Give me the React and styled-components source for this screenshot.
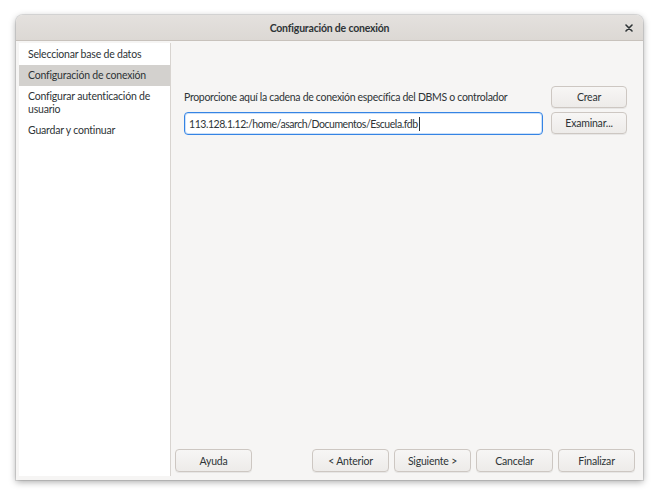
import styled, { createGlobalStyle } from 'styled-components';

const GlobalStyle = createGlobalStyle`
  html, body {
    margin: 0;
    padding: 0;
    background: #ffffff;
  }
  body {
    font-family: Lato, "Noto Sans", sans-serif;
    font-size: 10.5px;
    letter-spacing: -0.2px;
    color: #2e3436;
  }
`;

const Page = styled.div`
  padding: 15px 18px 20px 16px;
`;

const Window = styled.div`
  width: 627px;
  height: 465px;
  display: flex;
  flex-direction: column;
  background: #f6f5f4;
  border-radius: 7px 7px 0 0;
  box-shadow: 0 2px 7px rgba(0,0,0,0.35), 0 0 0 1px rgba(0,0,0,0.1);
  overflow: hidden;
`;

const TitleBar = styled.div`
  height: 25px;
  flex: none;
  display: flex;
  align-items: center;
  justify-content: center;
  position: relative;
  background: linear-gradient(#e4e1de, #dcd8d4);
  border-bottom: 1px solid #c8c2bc;
  font-weight: bold;
  color: #2e3436;
`;

const CloseButton = styled.button`
  position: absolute;
  right: 6px;
  top: 5px;
  width: 16px;
  height: 16px;
  padding: 0;
  border: none;
  background: transparent;
  display: flex;
  align-items: center;
  justify-content: center;
`;

const Body = styled.div`
  flex: 1;
  display: flex;
  padding: 2px 4px 4px 3px;
  min-height: 0;
`;

const Sidebar = styled.ul`
  width: 151px;
  flex: none;
  margin: 0;
  padding: 1px 0 0;
  list-style: none;
  background: #ffffff;
  border-right: 1px solid #d8d4d0;
`;

const SideItem = styled.li`
  padding: 4px 9px;
  line-height: 13px;
  background: ${p => (p.$active ? '#d3d1ce' : 'transparent')};
`;

const Content = styled.div`
  flex: 1;
  display: flex;
  flex-direction: column;
`;

const Form = styled.div`
  display: grid;
  grid-template-columns: 1fr 76px;
  grid-template-rows: 22px 23px;
  column-gap: 8px;
  row-gap: 4px;
  padding: 43px 12px 0 13px;
`;

const Label = styled.div`
  align-self: center;
  white-space: nowrap;
  letter-spacing: -0.3px;
`;

const Entry = styled.div`
  display: flex;
  align-items: center;
  height: 23px;
  box-sizing: border-box;
  padding: 0 4px;
  background: #ffffff;
  border: 1px solid #3584e4;
  border-radius: 4px;
  box-shadow: inset 0 0 0 1px rgba(53,132,228,0.25);
  white-space: nowrap;
  letter-spacing: -0.45px;
`;

const Caret = styled.span`
  display: inline-block;
  width: 1px;
  height: 14px;
  background: #2e3436;
  margin-left: 1px;
`;

const Button = styled.button`
  width: ${p => p.$width || 77}px;
  height: ${p => p.$height || 23}px;
  box-sizing: border-box;
  padding: 0;
  font: inherit;
  letter-spacing: inherit;
  color: #2e3436;
  background: linear-gradient(#f7f6f5, #edebe9);
  border: 1px solid #cdc7c2;
  border-radius: 4px;
  box-shadow: 0 1px rgba(0,0,0,0.06);
`;

const Spacer = styled.div`
  flex: 1;
`;

const Footer = styled.div`
  display: flex;
  gap: 5px;
  padding: 0 4px 4px 4px;
`;

const Grow = styled.div`
  flex: 1;
`;

export default function App() {
  return (
    <>
      <GlobalStyle />
      <Page>
        <Window>
          <TitleBar>
            Configuración de conexión
            <CloseButton aria-label="Cerrar">
              <svg width="8" height="8" viewBox="0 0 8 8">
                <path d="M1 1L7 7M7 1L1 7" stroke="#2e3436" strokeWidth="1.6" strokeLinecap="round" />
              </svg>
            </CloseButton>
          </TitleBar>
          <Body>
            <Sidebar>
              <SideItem>Seleccionar base de datos</SideItem>
              <SideItem $active>Configuración de conexión</SideItem>
              <SideItem>Configurar autenticación de usuario</SideItem>
              <SideItem>Guardar y continuar</SideItem>
            </Sidebar>
            <Content>
              <Form>
                <Label>Proporcione aquí la cadena de conexión específica del DBMS o controlador</Label>
                <Button $width={76} $height={22}>Crear</Button>
                <Entry>
                  113.128.1.12:/home/asarch/Documentos/Escuela.fdb
                  <Caret />
                </Entry>
                <Button $width={76} $height={22}>Examinar...</Button>
              </Form>
              <Spacer />
              <Footer>
                <Button>Ayuda</Button>
                <Grow />
                <Button>&lt; Anterior</Button>
                <Button>Siguiente &gt;</Button>
                <Button>Cancelar</Button>
                <Button>Finalizar</Button>
              </Footer>
            </Content>
          </Body>
        </Window>
      </Page>
    </>
  );
}
